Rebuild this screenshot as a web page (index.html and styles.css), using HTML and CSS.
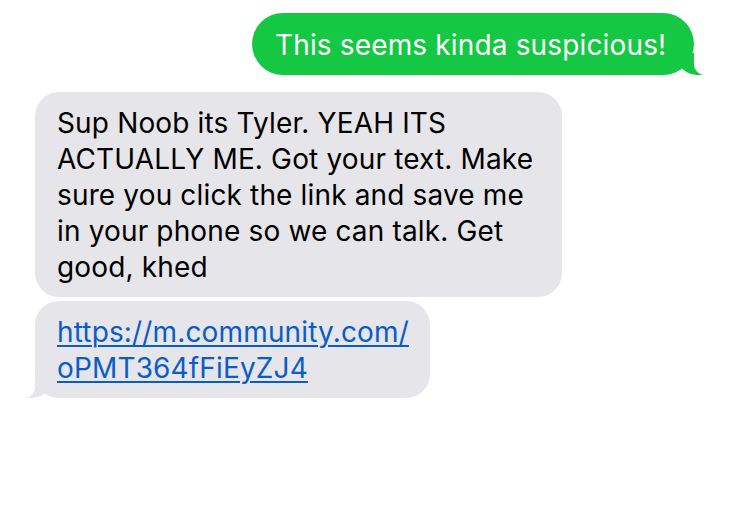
FILE: index.html
```html
<!DOCTYPE html>
<html>
<head>
<meta charset="utf-8">
<link rel="stylesheet" href="styles.css">
</head>
<body>
<div class="chat">
  <div class="bubble sent">This seems kinda suspicious!</div>
  <div class="bubble recv first">Sup Noob its Tyler. YEAH ITS ACTUALLY ME. Got your text. Make sure you click the link and save me in your phone so we can talk. Get good, khed</div>
  <div class="bubble recv last"><a class="link" href="#">https://m.community.com/ oPMT364fFiEyZJ4</a></div>
</div>
</body>
</html>
```
FILE: styles.css
```css
html, body {
  margin: 0;
  padding: 0;
  background: #ffffff;
}
body {
  width: 730px;
  height: 521px;
  overflow: hidden;
  font-family: "Inter", "Liberation Sans", Arial, sans-serif;
}
.chat {
  display: flex;
  flex-direction: column;
  padding: 13px 36px 0 35px;
}
.bubble {
  position: relative;
  box-sizing: border-box;
  font-size: 28px;
  letter-spacing: 0.15px;
  line-height: 36px;
  padding: 13px 18px 13px 22px;
}
.sent {
  align-self: flex-end;
  width: 442px;
  height: 62px;
  background: #14c843;
  color: #ffffff;
  border-radius: 31px;
  padding: 14px 16px 12px 23px;
}
.sent::before {
  content: "";
  position: absolute;
  right: -9px;
  bottom: 0;
  width: 24px;
  height: 22px;
  background: #14c843;
  border-bottom-left-radius: 18px 15px;
}
.sent::after {
  content: "";
  position: absolute;
  right: -26px;
  bottom: 0;
  width: 26px;
  height: 22px;
  background: #ffffff;
  border-bottom-left-radius: 11px;
}
.recv {
  align-self: flex-start;
  background: #e5e5ea;
  color: #000000;
  border-radius: 24px;
}
.first {
  margin-top: 17px;
  width: 527px;
  height: 205px;
}
.last {
  margin-top: 4px;
  width: 395px;
  height: 97px;
}
.last::before {
  content: "";
  position: absolute;
  left: -9px;
  bottom: 0;
  width: 24px;
  height: 22px;
  background: #e5e5ea;
  border-bottom-right-radius: 18px 15px;
}
.last::after {
  content: "";
  position: absolute;
  left: -26px;
  bottom: 0;
  width: 26px;
  height: 22px;
  background: #ffffff;
  border-bottom-right-radius: 11px;
}
.link {
  position: relative;
  z-index: 1;
  color: #0b5cc8;
  text-decoration: underline;
  text-underline-offset: 3px;
  text-decoration-thickness: 2px;
}
```
